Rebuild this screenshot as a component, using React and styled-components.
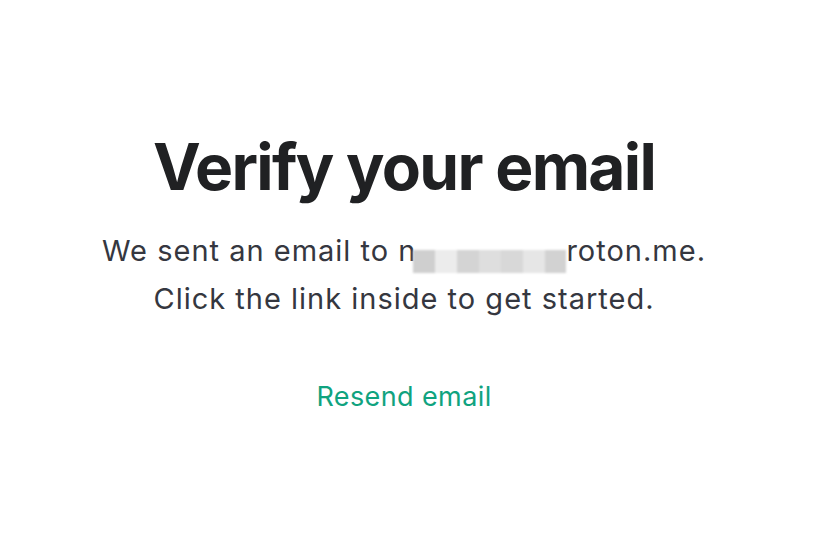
import styled, { createGlobalStyle } from "styled-components";

// Page-wide reset
const GlobalStyle = createGlobalStyle`
    html, body {
        margin: 0;
        padding: 0;
        background: #ffffff;
    }

    body {
        font-family: Inter, "Noto Sans", "Liberation Sans", sans-serif;
        -webkit-font-smoothing: antialiased;
    }
`;

// Full window, content a little left of centre like the reference
const StyledPage = styled.main`
    width: 808px;
    height: 558px;
    display: flex;
    flex-direction: column;
    align-items: center;
    box-sizing: border-box;
    padding-top: 128px;
`;

const StyledTitle = styled.h1`
    margin: 0;
    font-size: 64px;
    font-weight: 700;
    line-height: 78px;
    letter-spacing: -1.7px;
    color: #202123;
`;

const StyledMessage = styled.p`
    margin: 21px 0 0 0;
    font-size: 29px;
    font-weight: 400;
    line-height: 48px;
    letter-spacing: 1px;
    text-align: center;
    color: #353740;
`;

// Pixelated block hiding the address
const StyledRedaction = styled.span`
    display: inline-flex;
    width: ${(props) => props.$width}px;
    height: 23px;
    margin-left: -3px;
    vertical-align: -12px;
    filter: blur(1px);
`;

const StyledCell = styled.span`
    flex: 1;
    background: ${(props) => props.$shade};
`;

const StyledResend = styled.button`
    margin-top: 58px;
    padding: 0;
    border: none;
    background: none;
    font-family: inherit;
    font-size: 27px;
    line-height: 32px;
    letter-spacing: 0.4px;
    color: #10a37f;
    cursor: pointer;
`;

const shades = ["#cfcfcf", "#ececec", "#d4d4d4", "#dedede", "#d8d8d8", "#e6e6e6", "#d2d2d2"];

function App() {
    return (
        <>
            <GlobalStyle />
            <StyledPage>
                <StyledTitle>Verify your email</StyledTitle>
                <StyledMessage>
                    We sent an email to n
                    <StyledRedaction $width={153}>
                        {shades.map((shade, i) => (
                            <StyledCell key={i} $shade={shade} />
                        ))}
                    </StyledRedaction>
                    roton.me.
                    <br />
                    Click the link inside to get started.
                </StyledMessage>
                <StyledResend>Resend email</StyledResend>
            </StyledPage>
        </>
    );
}

export default App;
